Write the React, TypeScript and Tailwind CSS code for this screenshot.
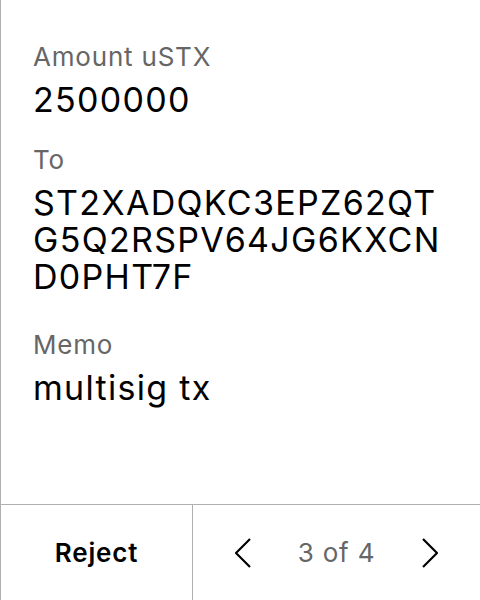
const fields = [
  { label: 'Amount uSTX', value: '2500000', space: 'mt-0' },
  { label: 'To', value: 'ST2XADQKC3EPZ62QTG5Q2RSPV64JG6KXCND0PHT7F', space: 'mt-[18px]' },
  { label: 'Memo', value: 'multisig tx', space: 'mt-[26px]' },
];

function Chevron({ dir }: { dir: 'left' | 'right' }) {
  return (
    <svg width="16" height="30" viewBox="0 0 16 30" fill="none">
      <path
        d={dir === 'left' ? 'M15 1L1 15L15 29' : 'M1 1L15 15L1 29'}
        stroke="black"
        strokeWidth="2.2"
      />
    </svg>
  );
}

export default function App() {
  return (
    <div className="w-[480px] h-[600px] flex flex-col bg-white border-l border-[#b0b0b0] text-black font-['Inter','Noto_Sans',sans-serif]">
      <div className="flex-1 flex flex-col px-8 pt-[33px]">
        {fields.map((f) => (
          <div key={f.label} className={`flex flex-col ${f.space}`}>
            <span className="text-[26px] leading-[48px] tracking-[0.8px] text-[#666666]">{f.label}</span>
            <span className="text-[34px] leading-[37px] tracking-[1.3px] break-all">{f.value}</span>
          </div>
        ))}
      </div>

      <div className="h-[96px] flex border-t border-[#b0b0b0]">
        <button className="w-[191px] flex items-center justify-center text-[26px] font-semibold tracking-[0.8px]">
          Reject
        </button>
        <div className="flex-1 flex items-center justify-between border-l border-[#b0b0b0] px-[42px]">
          <Chevron dir="left" />
          <span className="text-[26px] tracking-[0.8px] text-[#666666]">3 of 4</span>
          <Chevron dir="right" />
        </div>
      </div>
    </div>
  );
}
